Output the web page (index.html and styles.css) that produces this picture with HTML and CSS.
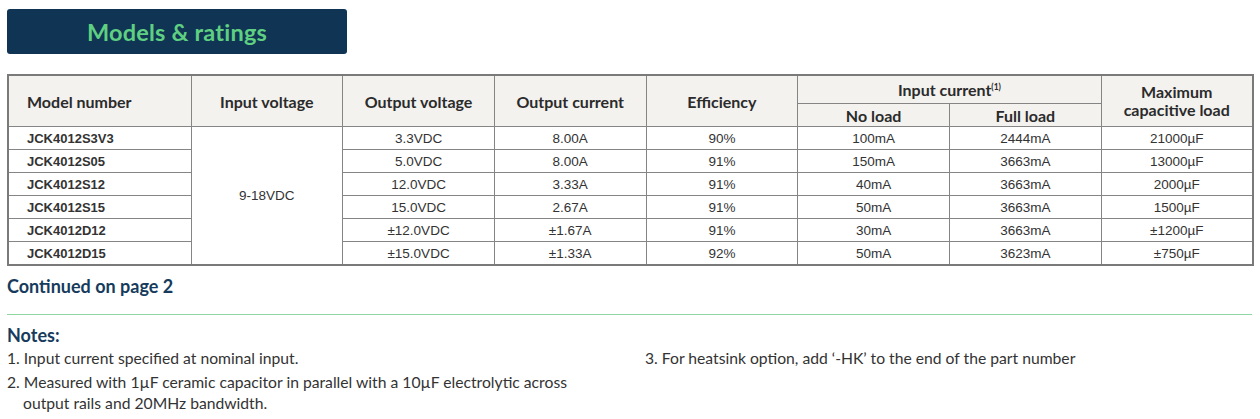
FILE: index.html
```html
<!DOCTYPE html>
<html lang="en">
<head>
<meta charset="utf-8">
<title>Models &amp; ratings</title>
<link rel="stylesheet" href="styles.css">
</head>
<body>
<div class="page">
  <div class="banner"><h1 class="banner-title">Models &amp; ratings</h1></div>

  <table class="ratings">
    <colgroup>
      <col class="c-model"><col class="c-std"><col class="c-std"><col class="c-std"><col class="c-std"><col class="c-std"><col class="c-std"><col class="c-std">
    </colgroup>
    <thead>
      <tr class="hrow1">
        <th rowspan="2" class="left">Model number</th>
        <th rowspan="2">Input voltage</th>
        <th rowspan="2">Output voltage</th>
        <th rowspan="2">Output current</th>
        <th rowspan="2">Efficiency</th>
        <th colspan="2">Input current<sup>(1)</sup></th>
        <th rowspan="2" class="twoline">Maximum<br>capacitive load</th>
      </tr>
      <tr class="hrow2">
        <th>No load</th>
        <th>Full load</th>
      </tr>
    </thead>
    <tbody>
      <tr>
        <td class="model">JCK4012S3V3</td>
        <td rowspan="6">9-18VDC</td>
        <td>3.3VDC</td><td>8.00A</td><td>90%</td><td>100mA</td><td>2444mA</td><td>21000µF</td>
      </tr>
      <tr>
        <td class="model">JCK4012S05</td>
        <td>5.0VDC</td><td>8.00A</td><td>91%</td><td>150mA</td><td>3663mA</td><td>13000µF</td>
      </tr>
      <tr>
        <td class="model">JCK4012S12</td>
        <td>12.0VDC</td><td>3.33A</td><td>91%</td><td>40mA</td><td>3663mA</td><td>2000µF</td>
      </tr>
      <tr>
        <td class="model">JCK4012S15</td>
        <td>15.0VDC</td><td>2.67A</td><td>91%</td><td>50mA</td><td>3663mA</td><td>1500µF</td>
      </tr>
      <tr>
        <td class="model">JCK4012D12</td>
        <td>±12.0VDC</td><td>±1.67A</td><td>91%</td><td>30mA</td><td>3663mA</td><td>±1200µF</td>
      </tr>
      <tr>
        <td class="model">JCK4012D15</td>
        <td>±15.0VDC</td><td>±1.33A</td><td>92%</td><td>50mA</td><td>3623mA</td><td>±750µF</td>
      </tr>
    </tbody>
  </table>

  <p class="continued">Continued on page 2</p>
  <hr class="rule">

  <h2 class="notes-title">Notes:</h2>
  <div class="notes">
    <ol class="notes-col">
      <li>1. Input current specified at nominal input.</li>
      <li>2. Measured with 1µF ceramic capacitor in parallel with a 10µF electrolytic across output rails and 20MHz bandwidth.</li>
    </ol>
    <ol class="notes-col">
      <li>3. For heatsink option, add ‘-HK’ to the end of the part number</li>
    </ol>
  </div>
</div>
</body>
</html>
```

FILE: styles.css
```css
html, body {
  margin: 0;
  padding: 0;
  background: #ffffff;
}

.page {
  padding: 9px 8px 0 7px;
  font-family: "Lato", "Liberation Sans", sans-serif;
  color: #333333;
}

.banner {
  width: 340px;
  height: 45px;
  background: #0f3454;
  border-radius: 3px;
  display: flex;
  align-items: center;
  justify-content: center;
}

.banner-title {
  margin: 0;
  font-family: "Lato", sans-serif;
  font-weight: 700;
  font-size: 23.5px;
  color: #5fcf81;
  letter-spacing: 0.2px;
}

.ratings {
  margin-top: 20px;
  width: 1245px;
  border-collapse: collapse;
  table-layout: fixed;
  border: 2px solid #7a7a7a;
}

.c-model { width: 183px; }
.c-std { width: 151.7px; }

.ratings th,
.ratings td {
  border: 1px solid #858585;
  padding: 0;
  text-align: center;
  vertical-align: middle;
}

.ratings th {
  background: #f3f2ef;
  font-family: "Lato", sans-serif;
  font-weight: 700;
  font-size: 16px;
  color: #2b2b2b;
}

.hrow1 th { height: 27px; }
.hrow2 th { height: 22px; }

.ratings th.left {
  text-align: left;
  padding-left: 18px;
}

.ratings th.twoline {
  line-height: 18px;
}

.ratings sup {
  font-size: 8.5px;
  vertical-align: 6px;
  line-height: 0;
}

.ratings td {
  height: 22px;
  font-family: "Liberation Sans", Arial, sans-serif;
  font-size: 13.5px;
  color: #333333;
}

.ratings td.model {
  text-align: left;
  padding-left: 18px;
  font-weight: 700;
  font-size: 13px;
  color: #333333;
}

.continued {
  margin: 9px 0 0 0;
  font-family: "Lato", sans-serif;
  font-weight: 700;
  font-size: 18px;
  line-height: 22px;
  color: #163b5c;
}

.rule {
  margin: 17px 0 0 0;
  border: 0;
  border-top: 1px solid #8fd8a2;
  height: 0;
}

.notes-title {
  margin: 9px 0 0 0;
  font-family: "Lato", sans-serif;
  font-weight: 700;
  font-size: 18px;
  line-height: 22px;
  color: #163b5c;
}

.notes {
  display: grid;
  grid-template-columns: 590px 1fr;
  column-gap: 48px;
  margin-top: 2px;
}

.notes-col {
  list-style: none;
  margin: 0;
  padding: 0;
}

.notes-col li {
  font-family: "Lato", sans-serif;
  font-size: 15.7px;
  line-height: 21px;
  color: #333333;
  padding-left: 16px;
  text-indent: -16px;
  margin-bottom: 3px;
}
```
